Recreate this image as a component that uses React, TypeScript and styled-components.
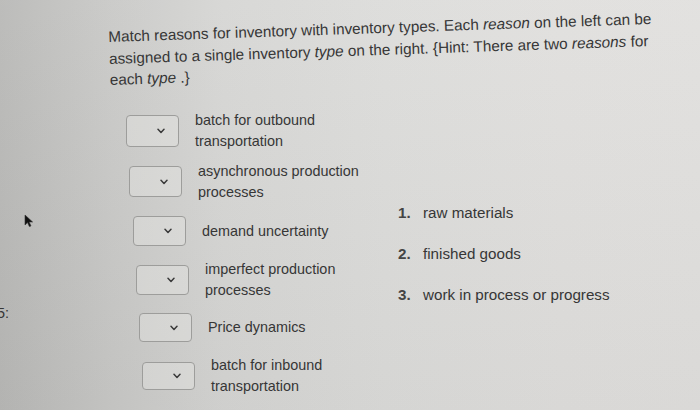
import React from "react";
import styled, { createGlobalStyle } from "styled-components";

const Global = createGlobalStyle`
  html, body { margin: 0; padding: 0; }
  body { width: 700px; height: 410px; overflow: hidden; }
`;

const Page = styled.div`
  position: relative;
  width: 700px;
  height: 410px;
  overflow: hidden;
  box-sizing: border-box;
  padding: 26px 0 0 109px;
  background:
    linear-gradient(to bottom, rgba(255,255,255,0.05), rgba(0,0,0,0.03)),
    linear-gradient(to right, #b9b9b7 0%, #c9c9c7 16%, #d6d6d4 32%, #dcdcda 55%, #e0dfdd 80%, #e1e0de 100%);
  font-family: "Liberation Sans", Arial, sans-serif;
  font-size: 14.4px;
  color: #363636;
`;

const Prompt = styled.p`
  margin: 0;
  font-size: 15.3px;
  line-height: 21.5px;
  white-space: nowrap;
  transform: rotate(-1.9deg);
  transform-origin: 0 50%;
  em { font-style: italic; }
`;

const Body = styled.div`
  display: flex;
  margin-top: 15px;
`;

const LeftCol = styled.div`
  width: 272px;
  padding-left: 17px;
  display: flex;
  flex-direction: column;
`;

const Row = styled.div<{ $shift: number; $h: number }>`
  display: flex;
  align-items: center;
  gap: 16px;
  height: ${(p) => p.$h}px;
  margin-left: ${(p) => p.$shift}px;
`;

const SelectBox = styled.div<{ $h: number }>`
  flex: none;
  width: 53px;
  height: ${(p) => p.$h}px;
  box-sizing: border-box;
  border: 1px solid #9d9d9b;
  border-radius: 4px;
  background: rgba(235, 235, 233, 0.35);
  display: flex;
  align-items: center;
  justify-content: flex-end;
  padding-right: 13px;
`;

const Label = styled.div`
  line-height: 21px;
`;

const TypeList = styled.ol`
  list-style: none;
  margin: 0;
  padding: 97px 0 0 0;
  display: flex;
  flex-direction: column;
  gap: 21px;
`;

const TypeItem = styled.li`
  display: flex;
  font-size: 15.2px;
  line-height: 20px;
`;

const Num = styled.span`
  width: 25px;
  flex: none;
  font-weight: bold;
  color: #444;
`;

const Cursor = styled.svg`
  position: absolute;
  left: 24px;
  top: 214px;
`;

const EdgeText = styled.span`
  position: absolute;
  left: -3px;
  top: 305px;
`;

const Chevron = () => (
  <svg width="8" height="6" viewBox="0 0 8 6">
    <path d="M1 1.2 L4 4.4 L7 1.2" fill="none" stroke="#3a3a3a" strokeWidth="1.5" strokeLinecap="round" strokeLinejoin="round" />
  </svg>
);

const reasons: { label: React.ReactNode; shift: number; h: number; row: number }[] = [
  { label: <>batch for outbound<br />transportation</>, shift: 0, h: 32, row: 51 },
  { label: <>asynchronous production<br />processes</>, shift: 3, h: 31, row: 50 },
  { label: <>demand uncertainty</>, shift: 7, h: 30, row: 49 },
  { label: <>imperfect production<br />processes</>, shift: 10, h: 30, row: 48 },
  { label: <>Price dynamics</>, shift: 13, h: 29, row: 48 },
  { label: <>batch for inbound<br />transportation</>, shift: 16, h: 28, row: 48 },
];

const types = ["raw materials", "finished goods", "work in process or progress"];

export default function App() {
  return (
    <>
      <Global />
      <Page>
        <Prompt>
          Match reasons for inventory with inventory types. Each <em>reason</em> on the left can be
          <br />
          assigned to a single inventory <em>type</em> on the right. {"{"}Hint: There are two <em>reasons</em> for
          <br />
          each <em>type</em> .{"}"}
        </Prompt>
        <Body>
          <LeftCol>
            {reasons.map((r, i) => (
              <Row key={i} $shift={r.shift} $h={r.row}>
                <SelectBox $h={r.h}>
                  <Chevron />
                </SelectBox>
                <Label>{r.label}</Label>
              </Row>
            ))}
          </LeftCol>
          <TypeList>
            {types.map((t, i) => (
              <TypeItem key={t}>
                <Num>{i + 1}.</Num>
                <span>{t}</span>
              </TypeItem>
            ))}
          </TypeList>
        </Body>
        <Cursor width="10" height="14" viewBox="0 0 10 14">
          <path d="M1 1 L1 11 L3.5 8.6 L5.4 12.6 L7 11.9 L5.1 8 L8.6 8 Z" fill="#111" stroke="#333" strokeWidth="0.6" />
        </Cursor>
        <EdgeText>5:</EdgeText>
      </Page>
    </>
  );
}
